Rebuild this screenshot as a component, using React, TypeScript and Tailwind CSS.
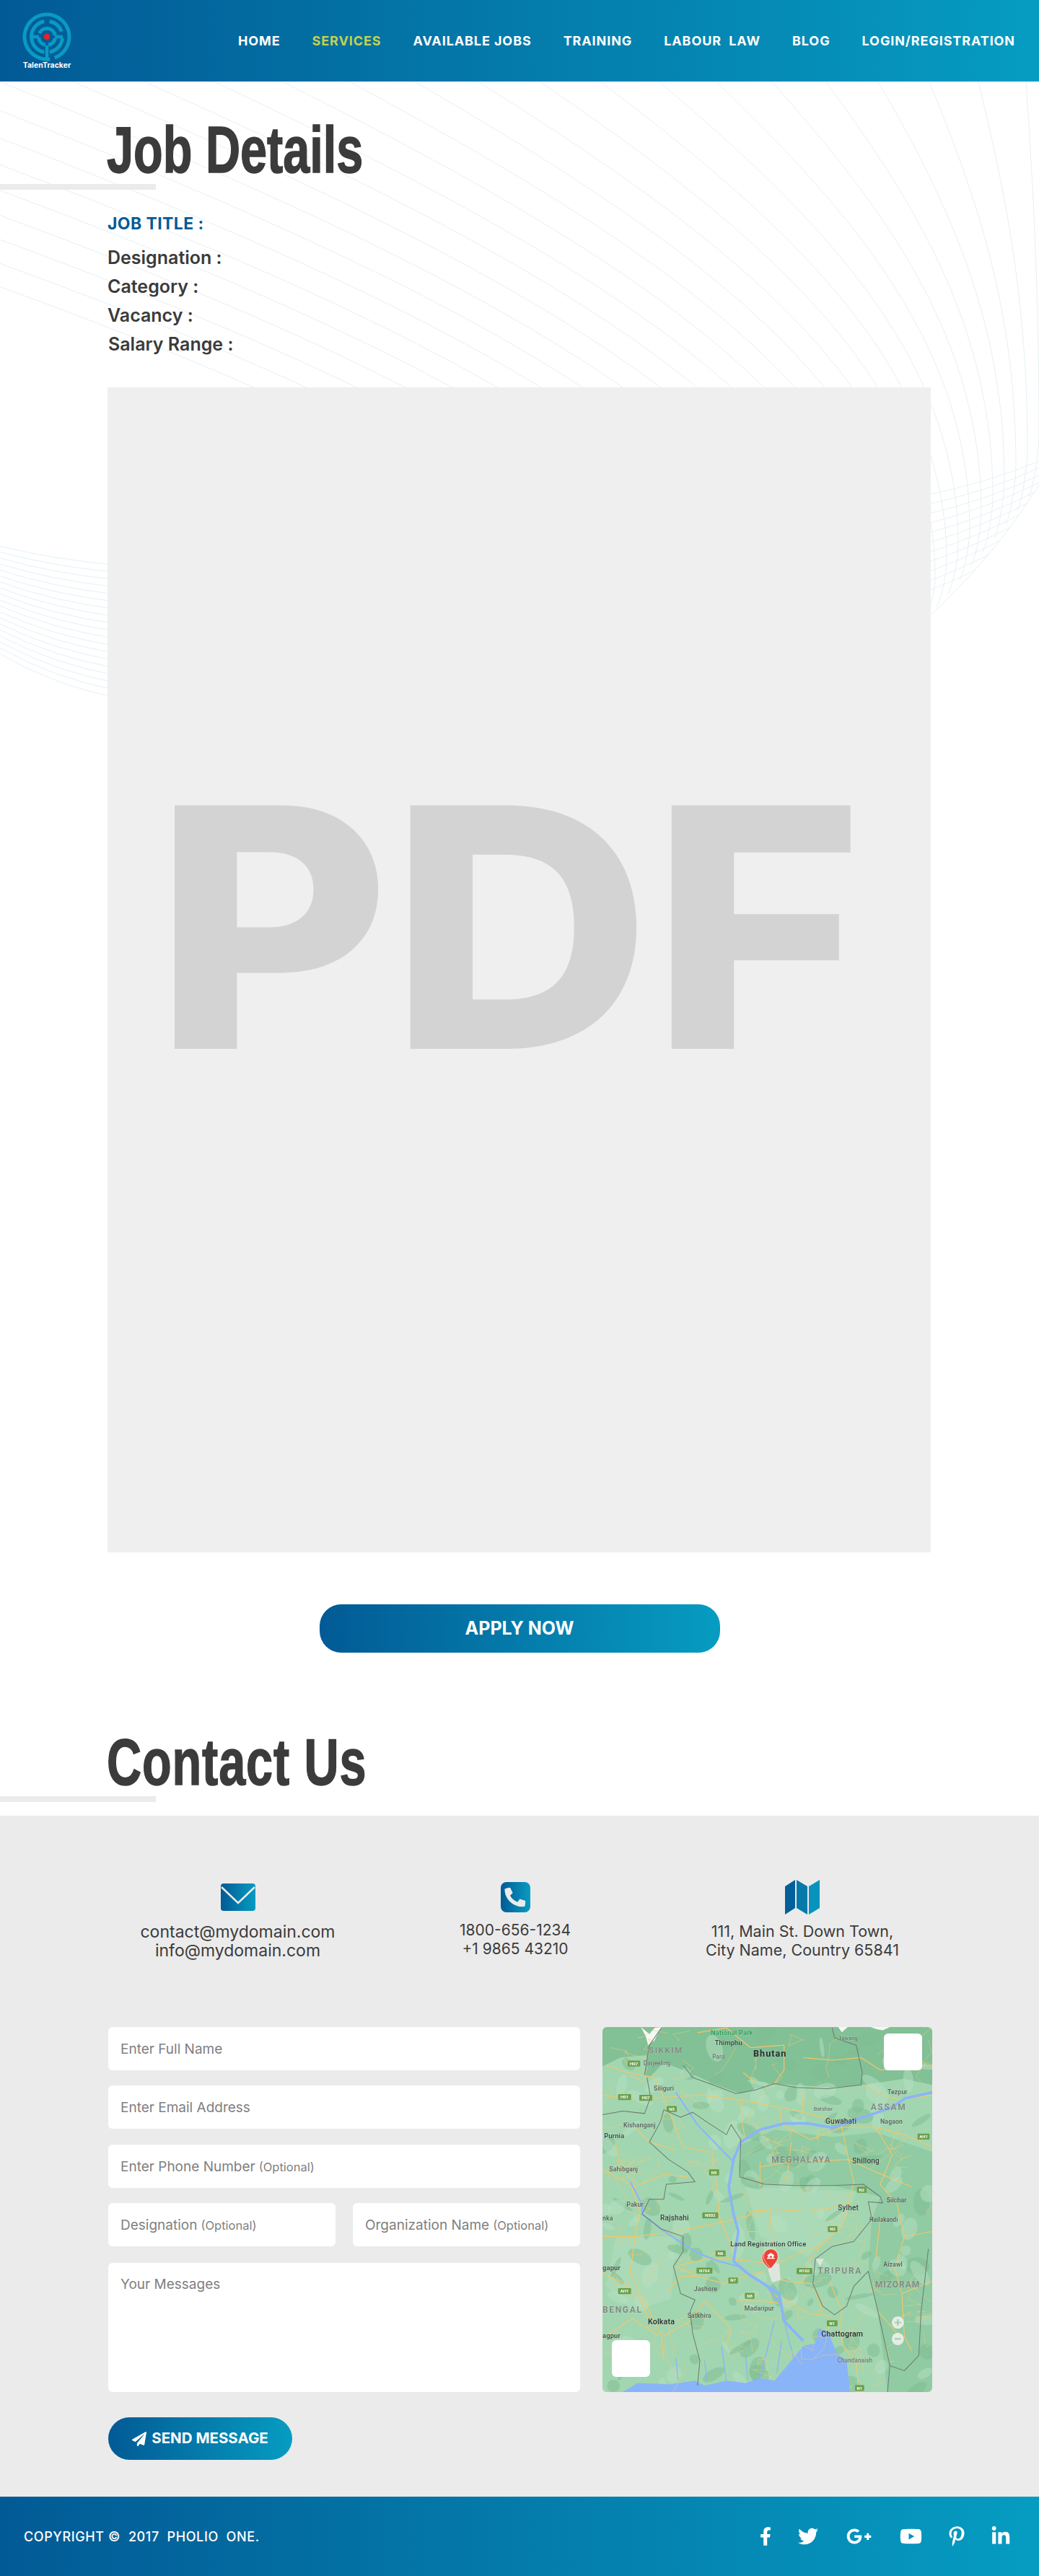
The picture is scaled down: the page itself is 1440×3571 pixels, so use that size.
import { FaFacebookF, FaGooglePlusG, FaLinkedinIn, FaPaperPlane, FaPhoneAlt, FaPinterestP, FaTwitter, FaYoutube } from "react-icons/fa";

const navItems = ["HOME", "SERVICES", "AVAILABLE JOBS", "TRAINING", "LABOUR  LAW", "BLOG", "LOGIN/REGISTRATION"];

const roads = [
  "M45 330 L180 350 L300 340 L450 330 L620 350 L780 380 L880 400 L1000 430 L1040 460",
  "M300 340 L340 440 L380 540 L500 560 L520 700 L530 820 L590 960 L610 1020",
  "M620 350 L625 440 L640 520 M780 380 L790 450 L910 510 L1040 460 L1180 460 L1300 490 L1416 540",
  "M880 400 L870 320 M1040 460 L1070 600 L1090 680 L1070 760 L1040 860 L960 930 L880 960 L770 1010",
  "M1180 460 L1250 570 L1200 690 L1270 770 L1300 900 L1260 1030 L1290 1130 L1300 1300 L1330 1360",
  "M700 620 L820 600 L1070 590 L1180 640 L1330 700 M830 520 L810 680 M700 600 L700 700",
  "M45 630 L180 700 L300 650 L400 660 M180 460 L240 520 L350 550 M100 530 L120 640",
  "M160 680 L200 800 L180 900 L160 1050 L240 1200 L290 1300 L300 1400",
  "M45 900 L180 900 L350 880 L450 860 L600 830 L740 790 L900 800 L1020 780 L1070 760",
  "M640 830 L660 800 L740 790 L750 920 L745 1030 M650 880 L750 880",
  "M350 1020 L480 990 L580 990 L740 1010 M350 1020 L440 1060 L550 1090 L600 1070 L720 1040",
  "M320 1120 L370 1060 L440 1060 M470 1160 L540 1230 L580 1270 L560 1340 M470 1160 L410 1240 L300 1300",
  "M600 1160 L700 1160 L800 1170 M740 1060 L810 1080 L920 1090 L960 1200 M800 1150 L900 1210 L1000 1220",
  "M960 930 L900 1000 L880 1080 M990 1080 L1040 1200 L1030 1260 L1050 1350 L1100 1400 L1110 1526",
  "M45 1050 L120 1080 L200 1150 L240 1240 M60 1300 L170 1230 L280 1300",
  "M440 80 L560 60 L660 140 L800 130 L800 230 L760 285 M630 240 L680 280 M880 180 L1000 190 L1120 180 L1200 230 L1416 210",
  "M60 210 L150 240 L260 260 L300 340 M1130 290 L1230 340 L1290 350 L1416 330",
  "M1300 900 L1416 880 M1200 830 L1180 1000 M1190 1200 L1270 1290 M1290 1130 L1416 1080",
];

const borders = [
  "M380 210 L420 260 L520 295 L600 325 L680 310 L760 285 L850 300 L980 305 L1120 290 L1125 240 L1100 130 L1010 100 L1000 60",
  "M620 510 L615 660 L720 690 L850 695 L1000 695 L1130 690 L1200 740 L1210 765 L1150 760 L1165 830 L1090 920 L1000 940 L930 990 L920 1090 L960 1180 L1010 1215 L1060 1180 L1090 1100 L1150 1040 L1190 1200 L1240 1420 L1230 1526",
  "M620 510 L580 450 L560 490 L480 440 L420 400 L370 420 L300 390 L285 440 L240 520 L320 590 L400 640 L430 680 L310 690 L300 750 L240 750 L210 810 L290 870 L380 900 L380 960 L340 1020 L370 1130 L430 1155 L410 1200 L420 1290 L450 1400 L440 1500",
  "M1400 950 L1370 1200 L1360 1380 L1300 1440 L1240 1420",
  "M220 250 L240 130 L290 60 M45 410 L130 395 L220 405 L245 340 L230 260",
];

const labels: [number, number, string, number, string, number?][] = [
  [495, 90, "National Park", 28, "#2e9e5b"],
  [512, 130, "Thimphu", 28, "#3c3f3d"],
  [502, 185, "Paro", 24, "#6d736e"],
  [672, 175, "Bhutan", 38, "#26292a", 3],
  [237, 163, "SIKKIM", 34, "#838a85", 5],
  [1027, 108, "Tawang", 22, "#6d736e"],
  [215, 210, "Darjeeling", 24, "#6d736e"],
  [258, 313, "Siliguri", 26, "#555a56"],
  [1230, 328, "Tezpur", 26, "#555a56"],
  [1160, 390, "ASSAM", 36, "#838a85", 5],
  [923, 393, "Batshar", 22, "#6d736e"],
  [132, 461, "Kishanganj", 26, "#555a56"],
  [972, 447, "Guwahati", 30, "#3c3f3d"],
  [1200, 447, "Nagaon", 26, "#555a56"],
  [52, 503, "Purnia", 28, "#3c3f3d"],
  [748, 603, "MEGHALAYA", 36, "#838a85", 4],
  [1084, 607, "Shillong", 30, "#3c3f3d"],
  [73, 637, "Sahibganj", 26, "#555a56"],
  [1226, 762, "Silchar", 26, "#555a56"],
  [1024, 795, "Sylhet", 30, "#3c3f3d"],
  [145, 781, "Pakur", 26, "#555a56"],
  [1155, 841, "Hailakandi", 24, "#555a56"],
  [285, 835, "Rajshahi", 30, "#3c3f3d"],
  [577, 940, "Land Registration Office", 28, "#33373a"],
  [940, 1049, "TRIPURA", 36, "#838a85", 5],
  [1213, 1020, "Aizawl", 26, "#555a56"],
  [1178, 1105, "MIZORAM", 36, "#838a85", 3],
  [425, 1120, "Jashore", 26, "#555a56"],
  [45, 1208, "BENGAL", 36, "#838a85", 5],
  [635, 1197, "Madaripur", 26, "#555a56"],
  [398, 1227, "Satkhira", 26, "#555a56"],
  [234, 1252, "Kolkata", 32, "#26292a"],
  [955, 1302, "Chattogram", 32, "#26292a"],
  [1022, 1407, "Chandanaish", 24, "#6d736e"],
  [45, 835, "nka", 26, "#555a56"],
  [45, 1035, "gapur", 28, "#3c3f3d"],
  [45, 1308, "agpur", 28, "#3c3f3d"],
];

const shields: [number, number, number, string][] = [
  [150, 192, 52, "H07"], [110, 327, 54, "H01"], [198, 330, 54, "H07"], [312, 375, 42, "N5"],
  [488, 630, 42, "N5"], [460, 803, 66, "N502"], [515, 956, 42, "N6"], [436, 1025, 66, "N704"],
  [568, 1065, 40, "N7"], [637, 1127, 40, "N8"], [852, 1027, 66, "N102"], [982, 858, 40, "N2"],
  [1103, 700, 40, "N2"], [978, 1237, 44, "N1"], [1095, 1498, 38, "N1"], [1355, 486, 50, "AH1"], [110, 1108, 54, "AH1"],
];

// fixed pseudo random numbers so the map texture is the same on every load
function makeRandom(seed: number) {
  let s = seed;
  return () => {
    s = (s * 16807) % 2147483647;
    return s / 2147483647;
  };
}

const rnd = makeRandom(4242);
const blotches = Array.from({ length: 170 }, () => {
  const x = 45 + rnd() * 1371;
  const y = 57 + rnd() * 1469;
  return { x, y, rx: 14 + rnd() * 46, ry: 8 + rnd() * 28, rot: rnd() * 180, dark: rnd() > 0.5 };
});
const smallRoads = Array.from({ length: 110 }, () => {
  let x = 45 + rnd() * 1371;
  let y = 57 + rnd() * 1380;
  let d = `M${x.toFixed(0)} ${y.toFixed(0)}`;
  for (let i = 0; i < 4; i++) {
    x += (rnd() - 0.5) * 130;
    y += (rnd() - 0.3) * 90;
    d += ` L${x.toFixed(0)} ${y.toFixed(0)}`;
  }
  return d;
});

function MapPicture() {
  return (
    <svg viewBox="45 57 1371 1469" preserveAspectRatio="none" className="h-full w-full blur-[0.4px]">
      <rect x="45" y="57" width="1371" height="1469" fill="#a2d6b0" />
      <path d="M45 57 L1416 57 L1416 290 L1300 265 L1130 290 L1000 300 L760 285 L620 325 L520 290 L380 230 L300 200 L240 260 L220 250 L230 170 L120 180 L45 215 Z" fill="#82c096" />
      <path d="M620 530 L760 470 L1000 500 L1180 480 L1416 560 L1416 1526 L1230 1526 L1190 1200 L1150 1040 L1165 830 L1200 740 L1000 695 L720 690 L620 660 Z" fill="#90cba3" />
      <path d="M640 700 L900 710 L1100 720 L1040 860 L900 980 L700 900 Z" fill="#aadab7" />
      <path d="M100 900 L350 900 L330 1150 L170 1200 L60 1100 Z" fill="#aadab7" />
      {blotches.map((b) => (
        <ellipse key={`${b.x}-${b.y}`} cx={b.x} cy={b.y} rx={b.rx} ry={b.ry} transform={`rotate(${b.rot} ${b.x} ${b.y})`} fill={b.dark ? "#7dbb91" : "#b5e0c1"} opacity="0.5" />
      ))}
      <path d="M205 57 L240 85 L262 60 L290 57 L272 90 L262 110 L235 130 L225 95 Z M1160 57 L1240 57 L1210 70 L1185 66 Z M1025 57 L1065 57 L1040 78 Z" fill="#f6f8f4" />
      <path d="M130 1526 L190 1490 L330 1495 L430 1480 L470 1500 L560 1480 L640 1490 L700 1470 L760 1480 L830 1400 L880 1340 L930 1330 L945 1270 L985 1290 L1020 1370 L1060 1400 L1075 1526 Z" fill="#8ab4f8" />
      <path d="M360 1480 L350 1390 M480 1480 L470 1400 M560 1480 L540 1340 M650 1480 L640 1380 M700 1470 L760 1240 M770 1450 L790 1320 M840 1390 L800 1240" fill="none" stroke="#8ab4f8" strokeWidth="4" />
      {smallRoads.map((d) => (
        <path key={d} d={d} fill="none" stroke="#eecb7c" strokeWidth="2" strokeLinejoin="round" opacity="0.8" />
      ))}
      {roads.map((d) => (
        <path key={d} d={d} fill="none" stroke="#f4c668" strokeWidth="3.5" strokeLinejoin="round" />
      ))}
      <path d="M730 1000 L780 1010 L785 1075 L750 1085 L735 1040 Z M930 990 L965 990 L950 1020 Z" fill="#dfe5de" />
      <path d="M1416 320 L1300 345 L1250 380 L1130 420 L1000 462 L900 445 L800 445 L700 470 L620 520 L590 590 L570 700 L590 810 L610 880 L590 1000 L650 1050 L780 1130 L800 1240 L880 1320" fill="none" stroke="#8ab4f8" strokeWidth="11" strokeLinejoin="round" />
      <path d="M210 810 L290 870 L380 930 L450 970 L530 1000 L610 1020 M350 320 L440 450 L520 530 L590 600 M160 680 L210 770 L210 810 M650 1050 L720 1090 L790 1180" fill="none" stroke="#8ab4f8" strokeWidth="6" strokeLinejoin="round" />
      {borders.map((d) => (
        <path key={d} d={d} fill="none" stroke="#6c7a70" strokeWidth="3" strokeLinejoin="round" />
      ))}
      {shields.map(([x, y, w, t]) => (
        <g key={`${x}-${t}`}>
          <rect x={x} y={y} width={w} height="24" rx="3" fill="#6ba04a" />
          <text x={x + w / 2} y={y + 18} textAnchor="middle" fontSize="18" fontWeight="700" fill="#fff" fontFamily="Roboto, sans-serif">{t}</text>
        </g>
      ))}
      {labels.map(([x, y, t, s, c, sp]) => (
        <text key={t} x={x} y={y} fontSize={s} fill={c} letterSpacing={sp ?? 0.5} fontWeight={sp ? 700 : 500} fontFamily="Roboto, sans-serif" stroke="#ffffff" strokeOpacity="0.35" strokeWidth="1.5" paintOrder="stroke">{t}</text>
      ))}
      <path d="M708 985 A30 30 0 0 1 768 985 C768 1005 748 1018 738 1030 C728 1018 708 1005 708 985 Z" fill="#ea4335" stroke="#fff" strokeWidth="2" />
      <path d="M715 980 A30 30 0 0 1 775 980 C775 1000 755 1015 745 1030 C735 1015 715 1000 715 980 Z" fill="#ea4335" stroke="#fff" strokeWidth="2" />
      <path d="M729 990 H761 V985 H729 Z M745 966 L731 975 V979 H759 V975 Z M734 979 H740 V986 H734 Z M750 979 H756 V986 H750 Z" fill="#fff" />
      <circle cx="1273" cy="1246" r="25" fill="#e6ece6" />
      <circle cx="1273" cy="1312" r="25" fill="#e6ece6" />
      <path d="M1260 1246 H1286 M1273 1233 V1259" stroke="#9ed0a8" strokeWidth="6" />
      <path d="M1260 1312 H1286" stroke="#9ed0a8" strokeWidth="6" />
    </svg>
  );
}

function arc(r: number, a0: number, a1: number) {
  const rad = (a: number) => (a * Math.PI) / 180;
  const large = a1 - a0 > 180 ? 1 : 0;
  const x0 = 34 + r * Math.sin(rad(a0));
  const y0 = 34 - r * Math.cos(rad(a0));
  const x1 = 34 + r * Math.sin(rad(a1));
  const y1 = 34 - r * Math.cos(rad(a1));
  return `M${x0} ${y0} A${r} ${r} 0 ${large} 1 ${x1} ${y1}`;
}

function Logo() {
  return (
    <div className="flex w-[68px] flex-col items-center">
      <svg viewBox="0 0 68 68" className="h-[68px] w-[68px]" fill="none" stroke="#0a9ac3" strokeWidth="5">
        <path d={arc(31, 172, 520)} />
        <path d={arc(21.5, 10, 70)} />
        <path d={arc(21.5, 95, 170)} />
        <path d={arc(21.5, 190, 350)} />
        <path d={arc(11.5, 100, 170)} />
        <path d={arc(11.5, 190, 265)} />
        <path d={arc(11.5, 295, 440)} />
        <path d="M34 46 V68 M45 34 H56 M12 34 H23" strokeWidth="4.5" />
        <circle cx="34" cy="34" r="4.2" fill="#ee1c25" stroke="none" />
      </svg>
      <span className="-mt-[1px] whitespace-nowrap font-['Inter',sans-serif] text-[10.5px] leading-[14px] font-bold text-white">TalenTracker</span>
    </div>
  );
}

function PageLines() {
  const main = Array.from({ length: 26 }, (_, k) => {
    const px = 1440 - 16 * k;
    const py = 600 + 22 * k;
    const sx = 1422 - 65 * k - 1.1 * k * k;
    const ex = px - 14;
    const ey = 672 + (1440 - ex) * 1.2;
    return `M${sx} 113 C${sx + (px - sx) * 0.55} ${113 + (py - 113) * 0.3} ${px} ${py - (py - 113) * 0.4} ${px} ${py} C${px} ${py + 20} ${px - 6} ${ey - 18} ${ex} ${ey}`;
  });
  const cross = Array.from({ length: 11 }, (_, k) => {
    const y0 = 687 + 13.5 * k;
    const y1 = 639 + 10 * k;
    return `M1280 ${y0} Q1370 ${(y0 + y1) / 2 + 6} 1440 ${y1}`;
  });
  const left = Array.from({ length: 19 }, (_, k) => {
    const y0 = 757 + 8.3 * k;
    const y1 = 783 + 10.2 * k;
    return `M0 ${y0} Q75 ${y0 + (y1 - y0) * 0.72} 160 ${y1}`;
  });
  return (
    <svg className="pointer-events-none absolute top-0 left-0 h-[1100px] w-[1440px]" viewBox="0 0 1440 1100" fill="none">
      <clipPath id="wave-clip">
        <path d="M0 113 H1440 V672 Q1380 770 1290 852 L1280 862 H0 Z" />
      </clipPath>
      <g clipPath="url(#wave-clip)" stroke="#e7f0f3" strokeWidth="1">
        {main.map((d) => <path key={d} d={d} />)}
        {cross.map((d) => <path key={d} d={d} />)}
      </g>
      <path d="M1280 862 Q1380 770 1440 672" stroke="#e7f0f3" />
      <g stroke="#e3f2f6" strokeWidth="1">
        {left.map((d) => <path key={d} d={d} />)}
      </g>
    </svg>
  );
}

function Heading({ children, className }: { children: string; className?: string }) {
  return (
    <h1 className={`ml-[148px] h-[80px] origin-left scale-x-[0.74] font-['Liberation_Sans',sans-serif] text-[90px] leading-[80px] font-bold whitespace-nowrap text-[#3b3b3b] [-webkit-text-stroke:1.5px_#3b3b3b] ${className ?? ""}`}>
      {children}
    </h1>
  );
}

function Field({ label, optional, className }: { label: string; optional?: boolean; className?: string }) {
  return (
    <div className={`flex h-[60px] items-center rounded-md bg-white pt-[2px] pl-[17px] whitespace-nowrap text-[#808080] ${className ?? ""}`}>
      <span className="text-[19px]">{label}</span>
      {optional && <span className="ml-[5px] text-[16.5px]">(Optional)</span>}
    </div>
  );
}

export default function App() {
  return (
    <div className="relative w-[1440px] overflow-hidden bg-white font-['Inter',sans-serif]">
      <PageLines />

      <header className="relative flex h-[113px] items-center justify-between bg-linear-to-r/srgb from-[#025a95] to-[#069cc1] pr-[33px] pl-[31px]">
        <div className="mt-[1px]"><Logo /></div>
        <nav className="mt-[1px] flex gap-[44px] text-[18px] leading-none font-bold tracking-[0.9px] text-white">
          {navItems.map((item) => (
            <a key={item} className={`whitespace-pre ${item === "SERVICES" ? "text-[#c3d250]" : ""}`}>{item}</a>
          ))}
        </nav>
      </header>

      <main className="relative">
        <div className="pt-[55px]"><Heading>Job Details</Heading></div>
        <div className="mt-[7px] h-2 w-[216px] bg-[#ebebeb]" />

        <div className="mt-[32px] ml-[149px] text-[#3b3b3b]">
          <p className="text-[23px] leading-[30px] font-bold tracking-[0.4px] text-[#045b96]">JOB TITLE :</p>
          <div className="mt-[12px] text-[25px] leading-[40px] font-semibold">
            <p>Designation :</p>
            <p>Category :</p>
            <p>Vacancy :</p>
            <p className="ml-[1px]">Salary Range :</p>
          </div>
        </div>

        <div className="mt-[40px] ml-[149px] flex h-[1615px] w-[1141px] items-center justify-center bg-[#efefef] pr-[30px] pb-[120px]">
          <span className="scale-x-[1.08] text-[464px] leading-none font-extrabold text-[#d3d3d3]">PDF</span>
        </div>

        <div className="mt-[72px] flex justify-center">
          <button className="h-[67px] w-[555px] rounded-[30px] bg-linear-to-r/srgb from-[#025a95] to-[#069cc1] text-[25px] font-bold text-white">APPLY NOW</button>
        </div>

        <div className="mt-[112px]"><Heading className="tracking-[1.2px]">Contact Us</Heading></div>
        <div className="mt-[7px] h-2 w-[216px] bg-[#ebebeb]" />
      </main>

      <section className="relative mt-[19px] bg-[#ebebeb] pt-[89px] pb-[51px] pl-[150px]">
        <div className="grid grid-cols-[359px_410px_386px] text-center leading-[26px] text-[#3b3b3b]">
          <div>
            <div className="flex h-[48px] items-center justify-center">
              <svg viewBox="0 0 48 38" className="h-[38px] w-[48px]">
                <defs>
                  <linearGradient id="icon-grad" x1="0" x2="1" y1="0" y2="0">
                    <stop offset="0" stopColor="#025a95" />
                    <stop offset="1" stopColor="#069cc1" />
                  </linearGradient>
                </defs>
                <rect width="48" height="38" rx="4" fill="url(#icon-grad)" />
                <path d="M1 5 L24 27 L47 5" fill="none" stroke="#ebebeb" strokeWidth="2.5" />
              </svg>
            </div>
            <p className="mt-[11px] text-[23px]">contact@mydomain.com<br />info@mydomain.com</p>
          </div>
          <div>
            <div className="flex h-[48px] items-center justify-center">
              <div className="flex h-[42px] w-[41px] items-center justify-center rounded-[8px] bg-linear-to-r/srgb from-[#025a95] to-[#069cc1]">
                <FaPhoneAlt className="h-[28px] w-[28px] -rotate-[4deg] text-[#ebebeb]" />
              </div>
            </div>
            <p className="mt-[9px] text-[21px]">1800-656-1234<br />+1 9865 43210</p>
          </div>
          <div>
            <div className="flex h-[48px] items-center justify-center">
              <svg viewBox="0 0 48 48" className="h-[48px] w-[48px]">
                <path d="M0 9 L14 0 V39 L0 48 Z" fill="#025f99" />
                <path d="M16 0 L31 9 V48 L16 39 Z" fill="#0579a9" />
                <path d="M33 9 L48 0 V39 L33 48 Z" fill="#0694bd" />
              </svg>
            </div>
            <p className="mt-[10px] text-[21.5px]">111, Main St. Down Town,<br />City Name, Country 65841</p>
          </div>
        </div>

        <div className="mt-[93px] flex gap-[31px]">
          <form className="flex w-[654px] flex-col">
            <Field label="Enter Full Name" />
            <Field label="Enter Email Address" className="mt-[21px]" />
            <Field label="Enter Phone Number" optional className="mt-[22px]" />
            <div className="mt-[21px] flex gap-[24px]">
              <Field label="Designation" optional className="w-[315px]" />
              <Field label="Organization Name" optional className="w-[315px]" />
            </div>
            <div className="mt-[23px] h-[179px] rounded-md bg-white pt-[18px] pl-[17px] text-[19px] leading-[24px] text-[#808080]">Your Messages</div>
            <button type="button" className="mt-[35px] flex h-[59px] w-[255px] items-center justify-center gap-[7px] rounded-[30px] bg-linear-to-r/srgb from-[#025a95] to-[#069cc1] text-[20.5px] font-bold text-white">
              <FaPaperPlane className="h-[20px] w-[20px]" />
              SEND MESSAGE
            </button>
          </form>
          <div className="relative h-[506px] w-[457px] overflow-hidden rounded-md">
            <MapPicture />
            <div className="absolute top-[9px] right-[14px] h-[51px] w-[53px] rounded-md bg-white" />
            <div className="absolute bottom-[21px] left-[13px] h-[51px] w-[53px] rounded-md bg-white" />
          </div>
        </div>
      </section>

      <footer className="flex h-[110px] items-center justify-between bg-linear-to-r/srgb from-[#025a95] to-[#069cc1] pr-[40px] pl-[33px] text-white">
        <p className="text-[18px] font-medium tracking-[0.6px] whitespace-pre">COPYRIGHT ©  2017  PHOLIO  ONE.</p>
        <div className="flex items-center gap-[37px]">
          <FaFacebookF className="h-[28px] w-[16px]" />
          <FaTwitter className="h-[28px] w-[28px]" />
          <FaGooglePlusG className="h-[28px] w-[39px]" />
          <FaYoutube className="h-[28px] w-[31px]" />
          <FaPinterestP className="h-[28px] w-[22px]" />
          <FaLinkedinIn className="h-[28px] w-[26px]" />
        </div>
      </footer>
    </div>
  );
}
